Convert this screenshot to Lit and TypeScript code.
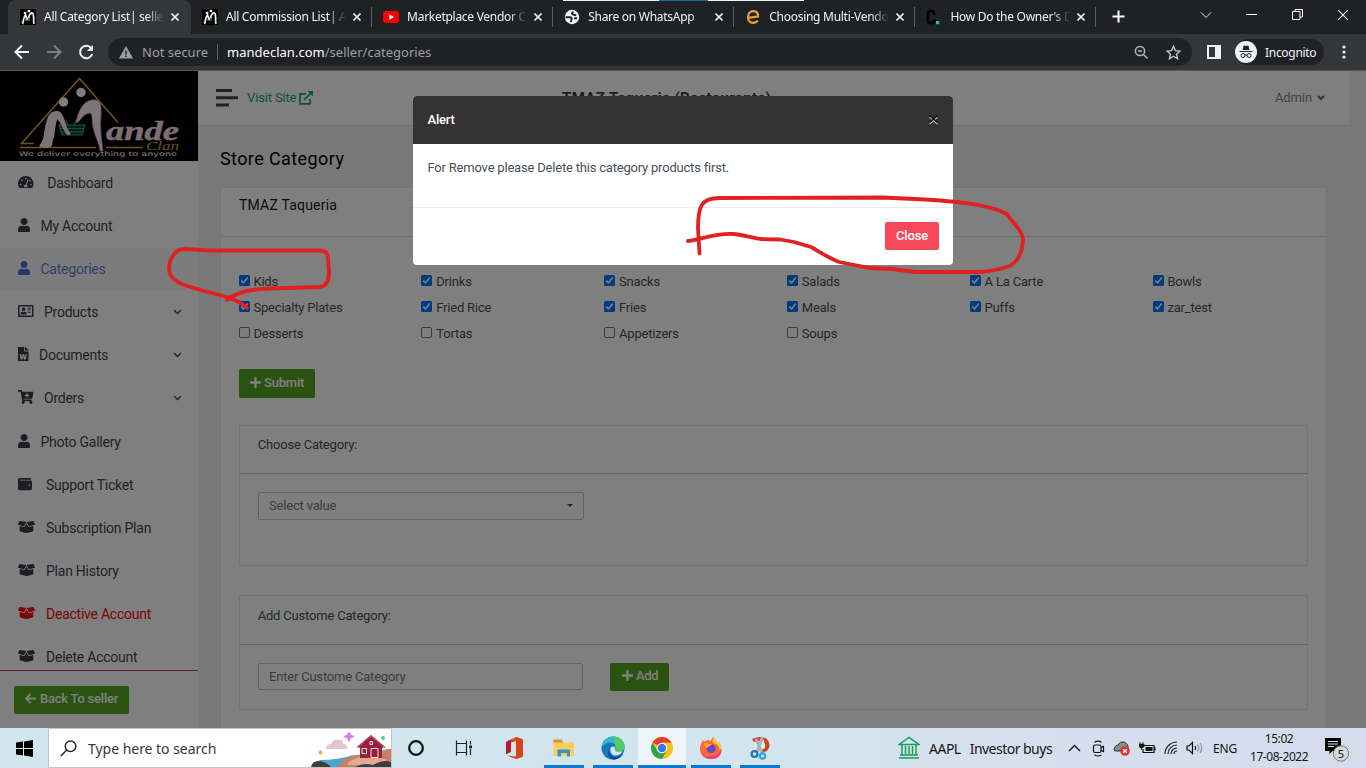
import { LitElement, html, svg, css, nothing } from "lit";
import { customElement } from "lit/decorators.js";
import { classMap } from "lit/directives/class-map.js";
import { styleMap } from "lit/directives/style-map.js";

const USER =
  "M224 256c70.7 0 128-57.3 128-128S294.7 0 224 0 96 57.3 96 128s57.3 128 128 128zm89.6 32h-16.7c-22.2 10.2-46.9 16-72.9 16s-50.6-5.8-72.9-16h-16.7C60.2 288 0 348.2 0 422.4V464c0 26.5 21.5 48 48 48h352c26.5 0 48-21.5 48-48v-41.6c0-74.2-60.2-134.4-134.4-134.4z";
const WALLET =
  "M461.2 128H80c-8.84 0-16-7.16-16-16s7.16-16 16-16h384c8.84 0 16-7.16 16-16 0-26.51-21.49-48-48-48H64C28.65 32 0 60.65 0 96v320c0 35.35 28.65 64 64 64h397.2c28.02 0 50.8-21.53 50.8-48V176c0-26.47-22.78-48-50.8-48zM416 336c-17.67 0-32-14.33-32-32s14.33-32 32-32 32 14.33 32 32-14.33 32-32 32z";
const BOX =
  "M425.7 256c-16.9 0-32.8-9-41.4-23.4L320 126l-64.2 106.6c-8.7 14.5-24.6 23.5-41.5 23.5-4.5 0-9-.6-13.3-1.9L64 215v178c0 14.7 10 27.5 24.2 31l216.2 54.1c10.2 2.5 20.9 2.5 31 0L551.8 424c14.2-3.6 24.2-16.4 24.2-31V215l-137 39.1c-4.3 1.3-8.8 1.9-13.3 1.9zm212.6-112.2L586.8 41c-3.1-6.2-9.8-9.8-16.7-8.9L320 64l91.7 152.1c3.8 6.3 11.4 9.3 18.5 7.3l197.9-56.5c9.9-2.9 14.7-13.9 10.2-23.1zM53.2 41L1.7 143.8c-4.6 9.2.3 20.2 10.1 23l197.9 56.5c7.1 2 14.7-1 18.5-7.3L320 64 69.8 32.1c-6.9-.8-13.5 2.7-16.6 8.9z";
const PLUS =
  "M416 208H272V64c0-17.67-14.33-32-32-32h-32c-17.67 0-32 14.33-32 32v144H32c-17.67 0-32 14.33-32 32v32c0 17.67 14.33 32 32 32h144v144c0 17.67 14.33 32 32 32h32c17.67 0 32-14.33 32-32V304h144c17.67 0 32-14.33 32-32v-32c0-17.67-14.33-32-32-32z";
const CART =
  "M504.717 320H211.572l6.545 32h268.418c15.401 0 26.816 14.301 23.403 29.319l-5.517 24.276C523.112 414.668 536 433.828 536 456c0 31.202-25.519 56.444-56.824 55.994-29.823-.429-54.35-24.631-55.155-54.447-.44-16.287 6.085-31.049 16.803-41.548H231.176C241.553 426.165 248 440.326 248 456c0 31.813-26.528 57.431-58.67 55.938-28.54-1.325-51.751-24.385-53.251-52.917-1.158-22.034 10.436-41.455 28.051-51.586L93.883 64H24C10.745 64 0 53.255 0 40V24C0 10.745 10.745 0 24 0h102.529c11.401 0 21.228 8.021 23.513 19.19L159.208 64H551.99c15.401 0 26.816 14.301 23.403 29.319l-47.273 208C525.637 312.246 515.923 320 504.717 320zM408 168h-48v-40c0-8.837-7.163-16-16-16h-16c-8.837 0-16 7.163-16 16v40h-48c-8.837 0-16 7.163-16 16v16c0 8.837 7.163 16 16 16h48v40c0 8.837 7.163 16 16 16h16c8.837 0 16-7.163 16-16v-40h48c8.837 0 16-7.163 16-16v-16c0-8.837-7.163-16-16-16z";
const GAUGE =
  "M288 32C129 32 0 161 0 320c0 53 14 102 39 145 6 9 16 15 28 15h442c12 0 22-6 28-15 25-43 39-92 39-145C576 161 447 32 288 32zm0 64c18 0 32 14 32 32s-14 32-32 32-32-14-32-32 14-32 32-32zM96 384c-18 0-32-14-32-32s14-32 32-32 32 14 32 32-14 32-32 32zm48-160c-18 0-32-14-32-32s14-32 32-32 32 14 32 32-14 32-32 32zm247-40l-61 184c13 12 22 29 22 48 0 12-3 22-9 32H233c-5-10-9-20-9-32 0-35 29-64 64-64h4l61-183c10-30 48-12 38 15zm24 57l20-60c4-3 9-5 13-5 18 0 32 14 32 32s-14 32-32 32c-16 0-30-11-33 1zm65 143c-18 0-32-14-32-32s14-32 32-32 32 14 32 32-14 32-32 32z";
const CARD =
  "M528 32H48C21.500 32 0 53.500 0 80v352c0 26.500 21.500 48 48 48h480c26.500 0 48-21.500 48-48V80c0-26.500-21.500-48-48-48zm-8 392H56V88h464v336zM208 256c35 0 64-29 64-64s-29-64-64-64-64 29-64 64 29 64 64 64zm-90 128h180c12 0 22-9 22-19v-19c0-32-30-58-67-58-11 0-19 8-45 8s-35-8-45-8c-37 0-67 26-67 58v19c0 10 10 19 22 19zm242-64h112v-40H360zm0-80h112v-40H360zm0-72h112v-36H360z";
const WORD =
  "M224 136V0H24C11 0 0 11 0 24v464c0 13 11 24 24 24h336c13 0 24-11 24-24V160H248c-13 0-24-11-24-24zm57 120h28c11 0 18 10 16 20l-38 168c-2 8-8 12-15 12h-38c-8 0-14-5-16-12-26-103-21-77-26-108-1 14-2 17-26 108-2 7-8 12-16 12h-37c-7 0-14-5-16-12L60 276c-3-10 5-20 15-20h29c8 0 14 5 16 13 16 79 20 110 21 123 2-10 5-32 32-124 2-7 8-12 15-12h22c8 0 14 5 16 12 28 94 30 112 31 124 2-11 4-36 19-123 2-8 8-13 15-13zm103-134v6H256V0h6c6 0 12 2 17 7l98 98c5 4 7 10 7 17z";

interface NavItem {
  label: string;
  d: string;
  vb: string;
  w: number;
  h: number;
  x: number;
  more?: boolean;
  kind?: string;
}
const NAV: NavItem[] = [
  { label: "Dashboard", d: GAUGE, vb: "0 0 576 512", w: 15.5, h: 14, x: 29.3 },
  { label: "My Account", d: USER, vb: "0 0 448 512", w: 12.2, h: 14, x: 22.5 },
  { label: "Categories", d: USER, vb: "0 0 448 512", w: 12.2, h: 14, x: 22.5, kind: "active" },
  { label: "Products", d: CARD, vb: "0 0 576 512", w: 15.5, h: 14, x: 26, more: true },
  { label: "Documents", d: WORD, vb: "0 0 384 512", w: 10.5, h: 14, x: 21, more: true },
  { label: "Orders", d: CART, vb: "0 0 576 512", w: 15.5, h: 14, x: 26, more: true },
  { label: "Photo Gallery", d: USER, vb: "0 0 448 512", w: 12.2, h: 14, x: 22.5 },
  { label: "Support Ticket", d: WALLET, vb: "0 0 512 512", w: 14, h: 14, x: 28 },
  { label: "Subscription Plan", d: BOX, vb: "0 0 640 512", w: 17, h: 14, x: 28 },
  { label: "Plan History", d: BOX, vb: "0 0 640 512", w: 17, h: 14, x: 28 },
  { label: "Deactive Account", d: BOX, vb: "0 0 640 512", w: 17, h: 14, x: 28, kind: "danger" },
  { label: "Delete Account", d: BOX, vb: "0 0 640 512", w: 17, h: 14, x: 28 },
];

const CATEGORIES: [string, boolean][] = [
  ["Kids", true], ["Drinks", true], ["Snacks", true], ["Salads", true], ["A La Carte", true], ["Bowls", true],
  ["Specialty Plates", true], ["Fried Rice", true], ["Fries", true], ["Meals", true], ["Puffs", true], ["zar_test", true],
  ["Desserts", false], ["Tortas", false], ["Appetizers", false], ["Soups", false],
];

const fa = (d: string, vb: string, w: number, h: number) =>
  html`<svg width=${w} height=${h} viewBox=${vb} fill="currentColor"><path fill-rule="evenodd" d=${d} /></svg>`;

const cross = (size: number, stroke: number) =>
  html`<svg width=${size} height=${size} viewBox="0 0 10 10" stroke="currentColor" stroke-width=${stroke} fill="none"><path d="M1 1l8 8M9 1l-8 8" /></svg>`;

const mandeIcon = svg`<rect width="16" height="16" fill="#000"/><path d="M1 14L8 1l7 9" stroke="#6b5325" stroke-width=".8" fill="none"/><rect x="5" y="8" width="5" height="4" fill="#1f5a40"/><circle cx="5" cy="4" r="1.300" fill="#fff"/><circle cx="9" cy="2" r="1.300" fill="#fff"/><path d="M2.500 15C4 12 3 8 5.500 6l2 5M8.500 9c1-4 2.500-5.500 4-5 2 1 .5 6 1.500 11" stroke="#f6eeee" stroke-width="1.700" fill="none"/>`;

const FAVICONS: Record<string, unknown> = {
  mande: mandeIcon,
  youtube: svg`<rect y="2" width="16" height="12" rx="3" fill="#f00"/><path d="M6.300 5.300v5.400L11 8z" fill="#fff"/>`,
  globe: svg`<circle cx="8" cy="8" r="7.200" fill="#f1f3f4"/><path d="M1.500 8.200l4.500.1q2 .2 1.600 2L6.800 13M9.500 3q-2.500 1-.8 2.500l3.500.8M10 9.500l3-.5" stroke="#202124" stroke-width="1.900" fill="none"/>`,
  ecom: svg`<path d="M2.800 8.800L13 7.500C13 4 11 2.200 8.400 2.200 5 2.200 3 4.800 3 8.200c0 3.200 2 5.600 5.300 5.600 2 0 3.400-.7 4.600-2" stroke="#f0a52e" stroke-width="2.200" fill="none"/>`,
  cdot: svg`<path d="M8 6V4.500C8 1 2 1 2 4.500v7C2 15 8 15 8 11.500V10" stroke="#000" stroke-width="2.800" fill="none"/><rect x="10" y="12" width="3.200" height="3.200" fill="#1cb5d8"/>`,
};

const TABS = [
  { icon: "mande", text: "All Category List| seller", active: true },
  { icon: "mande", text: "All Commission List| Admin" },
  { icon: "youtube", text: "Marketplace Vendor Commission" },
  { icon: "globe", text: "Share on WhatsApp" },
  { icon: "ecom", text: "Choosing Multi-Vendor" },
  { icon: "cdot", text: "How Do the Owner's Do" },
];

@customElement("browser-chrome")
class BrowserChrome extends LitElement {
  static styles = css`
    :host { display: block; height: 71px; background: #202124; color: #f1f3f4; font: 12px "Noto Sans", "Open Sans", sans-serif; box-sizing: border-box; position: relative; }
    svg { display: block; flex: none; }
    .peek { position: absolute; top: 0; left: 563px; width: 241px; height: 1px; background: linear-gradient(90deg, #f1f3f4 40%, #176ba8 40% 60%, #f1f3f4 60%); }
    .strip { display: flex; height: 34px; padding-left: 8px; align-items: stretch; }
    .tab { width: 181.100px; box-sizing: border-box; display: flex; align-items: center; padding: 0 10.500px 0 12px; position: relative; }
    .tab.active { background: #35363a; border-radius: 8px 8px 0 0; width: 183px; padding-right: 12px; margin-right: -1px; }
    .tab .name { flex: 1; min-width: 0; margin: 0 7px 0 8px; overflow: hidden; white-space: nowrap; letter-spacing: -.28px; line-height: 20px; -webkit-mask-image: linear-gradient(90deg, #000 85%, transparent 100%); }
    .sep { border-left: 1px solid #5b5c5f; height: 20px; align-self: center; margin-right: -1px; }
    .plus { margin: 10px 0 0 17px; }
    .win { margin-left: auto; display: flex; align-items: center; padding: 0 17px 5px 0; gap: 34.500px; }
    .bar { height: 36px; background: #35363a; border-bottom: 1px solid #55565a; display: flex; align-items: center; }
    .nav { width: 108px; display: flex; gap: 16px; padding-left: 14px; box-sizing: border-box; }
    .omni { width: 1084px; height: 28px; border-radius: 14px; background: #202124; display: flex; align-items: center; box-sizing: border-box; padding: 0 11px; font-size: 13px; color: #9aa0a6; }
    .warn { margin-right: 9px; }
    .div { width: 1px; height: 16px; background: #5f6368; margin: 0 9px 0 9px; }
    .url { letter-spacing: .01px; }
    .url b { font-weight: 400; color: #fff; }
    .tools { margin-left: auto; display: flex; gap: 17px; }
    .side { margin-left: 15px; }
    .incog { margin-left: 14px; width: 89px; height: 26px; border-radius: 13px; background: #202124; display: flex; align-items: center; gap: 8px; font-size: 12px; letter-spacing: -.3px; }
    .dots { margin-left: 18px; }
  `;
  render() {
    return html`
      <div class="peek"></div>
      <div class="strip">
        ${TABS.map(
          (t, i) => html`<div class=${classMap({ tab: true, active: !!t.active })}>
              <svg width="16" height="16" viewBox="0 0 16 16">${FAVICONS[t.icon]}</svg>
              <span class="name">${t.text}</span>
              <svg width="8" height="8" viewBox="0 0 8 8" stroke="#e8eaed" stroke-width="1.600"><path d="M.5 .5l7 7M7.500 .5l-7 7" /></svg>
            </div>
            ${i > 0 ? html`<span class="sep"></span>` : nothing}`
        )}
        <svg class="plus" width="13" height="13" stroke="#fff" stroke-width="2"><path d="M6.500 .5v12M.5 6.500h12" /></svg>
        <div class="win">
          <svg width="12" height="8" fill="none" stroke="#e8eaed"><path d="M1 1.500l5 5 5-5" /></svg>
          <svg width="11" height="2"><path d="M0 .5h11" stroke="#fff" /></svg>
          <svg width="11" height="11" fill="none" stroke="#fff"><path d="M.5 2.500h7.500v8H.5zM3 2.500v-2h7.500V8H8" /></svg>
          ${cross(12, 0.9)}
        </div>
      </div>
      <div class="bar">
        <div class="nav">
          <svg width="16" height="16" fill="none" stroke="#f1f3f4" stroke-width="2"><path d="M15 8H2M8 1.500L1.500 8 8 14.500" /></svg>
          <svg width="16" height="16" fill="none" stroke="#7d7f82" stroke-width="2"><path d="M1 8h13M8 1.500L14.500 8 8 14.500" /></svg>
          <svg width="16" height="16" fill="none" stroke="#f1f3f4" stroke-width="2"><path d="M13.200 4.200A6.200 6.200 0 1 0 14.200 10" /><path d="M15 1v6H9z" fill="#f1f3f4" stroke="none" /></svg>
        </div>
        <div class="omni">
          <svg class="warn" width="14" height="13" viewBox="0 0 14 13"><path d="M7 0l7 12.500H0z" fill="#9aa0a6" /><path d="M7 4.500v4M7 9.500v1.500" stroke="#202124" stroke-width="1.500" /></svg>
          <span>Not secure</span><span class="div"></span>
          <span class="url"><b>mandeclan.com</b>/seller/categories</span>
          <div class="tools">
            <svg width="15" height="15" fill="none" stroke="#b4b7ba" stroke-width="1.500"><circle cx="6" cy="6" r="4.600" /><path d="M9.500 9.500l4 4M4 6h4" /></svg>
            <svg width="15" height="15" viewBox="0 0 24 24" fill="none" stroke="#c4c7ca" stroke-width="2.200"><path d="M12 2l3 7 7.500.6-5.700 5 1.700 7.400L12 18l-6.500 4 1.700-7.400-5.700-5L9 9z" /></svg>
          </div>
        </div>
        <svg class="side" width="14" height="14"><path fill="#f1f3f4" fill-rule="evenodd" d="M0 0h14v14H0zM2 2v10h6V2z" /></svg>
        <div class="incog">
          <svg width="22" height="22" viewBox="0 0 22 22"><circle cx="11" cy="11" r="11" fill="#f1f3f4" /><path d="M7.500 9l1-4c1-1 1.500 0 2.500 0s1.500-1 2.500 0l1 4zM4.500 10h13v1h-13z" fill="#202124" /><g fill="none" stroke="#202124"><circle cx="8" cy="14.500" r="2" /><circle cx="14" cy="14.500" r="2" /><path d="M10 14.300q1-.8 2 0" /></g></svg>
          <span>Incognito</span>
        </div>
        <svg class="dots" width="4" height="14" fill="#f1f3f4"><circle cx="2" cy="2" r="1.600" /><circle cx="2" cy="7" r="1.600" /><circle cx="2" cy="12" r="1.600" /></svg>
      </div>
    `;
  }
}

@customElement("side-bar")
class SideBar extends LitElement {
  static styles = css`
    :host { display: flex; flex-direction: column; width: 198px; height: 657px; background: #fff; font: 14px Roboto, sans-serif; color: #3f474f; flex: none; }
    svg { display: block; flex: none; }
    .list { height: 510px; overflow: hidden; border-bottom: 1px solid #e02f7c; box-sizing: border-box; flex: none; }
    .item { height: 43.170px; display: flex; align-items: center; padding: 0 16px 0 18px; box-sizing: border-box; }
    .item .ico { color: #343a46; display: flex; margin-top: -2px; }
    .item.active { background: #f8f8f8; color: #5f7ed0; }
    .item.active .ico { color: #4a70d0; }
    .item.danger, .item.danger .ico { color: #fa0a10; }
    .label { flex: 1; line-height: 20px; white-space: nowrap; letter-spacing: -.24px; }
    .foot { padding: 15px 14px; }
    .btn { display: flex; align-items: center; gap: 4px; width: 115px; height: 28px; box-sizing: border-box; padding: 0 10px 4px 11px; border-radius: 2px; background: #55a522; color: #fff; font-size: 13px; font-weight: 500; white-space: nowrap; letter-spacing: -.22px; }
  `;
  render() {
    return html`
      <svg width="198" height="90" viewBox="0 0 198 90">
        <rect width="198" height="90" fill="#000" />
        <path d="M118 51.500L79.500 7.500 21.500 72.500H34M20 76.500h76M106 76.500h37" fill="none" stroke="#d8ac3c" stroke-width="1.500" />
        <path d="M59 54h26l-3 10H62zM60 57.500h24M61 61h22M66 50l2 4M76 49l-2 5" fill="#0c3c2a" stroke="#30a878" stroke-width="1.200" />
        <circle cx="81" cy="21.500" r="4.700" fill="#fff" /><circle cx="63.500" cy="31" r="4.700" fill="#fff" />
        <path d="M39.500 76c0-4 3-4 4-10 2-12 3-26 13-26 6 0 8 8 10 15 1 4 3 5 4 7 0 3-3 3-5 0-3-5-5-10-8-14-3 6-2 17-5 22 0 3 0 4-2 6-2 1-8 1-11 0z" fill="#f8e8ee" />
        <path d="M76 51c2-10 6-20 15-22 7-1 10 1 10 7 1 8-1 14 0 23 0 9 2 16 2 21h-3c-1-9-8-19-8-32 0-5-1-7-5-5-4 1-6 6-10 9z" fill="#f8e8ee" stroke="#b76384" stroke-width=".6" />
        <text x="106" y="68.500" font-family="Liberation Serif, serif" font-style="italic" font-weight="700" font-size="28" textLength="73" lengthAdjust="spacingAndGlyphs" fill="#f8dce6" stroke="#f8dce6" stroke-width=".5">ande</text>
        <text x="146" y="79" font-family="Liberation Serif, serif" font-style="italic" font-size="12" textLength="33" lengthAdjust="spacingAndGlyphs" fill="#d2aa40">Clan</text>
        <text x="19" y="85" font-family="DejaVu Sans, sans-serif" font-size="6.500" textLength="158" lengthAdjust="spacingAndGlyphs" fill="#fff">We deliver everything to anyone</text>
      </svg>
      <div class="list">
        ${NAV.map(
          (n) => html`<div class=${classMap({ item: true, [n.kind ?? "plain"]: true })}>
            <span class="ico" style=${styleMap({ width: n.x + "px" })}>${fa(n.d, n.vb, n.w, n.h)}</span>
            <span class="label">${n.label}</span>
            ${n.more ? html`<svg width="9" height="6" fill="none" stroke="#3f474f" stroke-width="1.300"><path d="M1 1l3.500 3.500L8 1" /></svg>` : nothing}
          </div>`
        )}
      </div>
      <div class="foot">
        <div class="btn"><svg width="11" height="11" fill="none" stroke="#fff" stroke-width="1.800"><path d="M11 5.500H1.500M5.500 1L1 5.500 5.500 10" /></svg>Back To seller</div>
      </div>
    `;
  }
}

@customElement("store-page")
class StorePage extends LitElement {
  static styles = css`
    :host { display: flex; flex-direction: column; flex: 1; height: 657px; overflow: hidden; background: #f0f0f0; font: 13px Roboto, sans-serif; color: #495057; letter-spacing: -.19px; }
    svg { display: block; flex: none; }
    .head { width: 1151px; height: 55px; box-sizing: border-box; background: #fff; border-bottom: 1px solid #e2e2e2; display: flex; align-items: center; padding: 0 24px 0 18px; flex: none; }
    .visit { margin: -1px 0 0 9px; color: #1d9f7e; display: flex; align-items: center; gap: 3px; width: 315px; letter-spacing: -.15px; }
    .shop { font-size: 15px; font-weight: 700; color: #343a46; letter-spacing: .36px; margin-top: -1px; }
    .admin { margin: -1px 0 0 auto; color: #82878c; display: flex; align-items: center; gap: 5px; letter-spacing: -.1px; }
    h1 { margin: 0; padding: 20px 0 0 22px; font-size: 18px; font-weight: 400; line-height: 25px; color: #000; letter-spacing: .4px; height: 61px; box-sizing: border-box; flex: none; }
    .card { margin-left: 22px; width: 1107px; background: #fff; flex: 1; box-sizing: border-box; border: 1px solid #e8e8e8; border-bottom: 0; }
    .card-head { height: 49px; border-bottom: 1px solid #dcdcdc; box-sizing: border-box; padding: 8px 18px; font-size: 14px; line-height: 19px; color: #16191c; letter-spacing: .2px; }
    .card-body { padding: 31px 18px 0 18px; }
    .grid { display: grid; grid-template-columns: repeat(6, 182.800px); grid-auto-rows: 26px; }
    .opt { display: flex; align-items: center; gap: 4px; }
    .opt svg { margin: -2px 0 0 -.4px; }
    .label { line-height: 18px; white-space: nowrap; margin-top: 1px; margin-left: -.2px; }
    .btn { display: flex; align-items: center; gap: 3px; box-sizing: border-box; border-radius: 2px; background: #55a522; color: #fff; font-size: 13px; font-weight: 500; letter-spacing: -.2px; }
    .submit { width: 76px; height: 29px; padding: 0 0 2px 11px; margin-top: 23px; }
    .add { width: 59px; height: 28px; padding: 0 0 3px 12px; letter-spacing: -.35px; }
    .panel { border: 1px solid #e8e8e8; width: 1069px; box-sizing: border-box; }
    .p1 { height: 141px; margin-top: 27px; }
    .p2 { height: 115px; margin-top: 29px; }
    .p-head { height: 48px; box-sizing: border-box; border-bottom: 1px solid #c8c8c8; padding: 9px 17.700px; line-height: 20px; }
    .p2 .p-head { height: 49px; padding-top: 10px; }
    .p-body { padding: 18px; display: flex; gap: 27px; }
    .field { width: 326px; height: 28px; box-sizing: border-box; border: 1px solid #c3c6c9; border-radius: 2px; padding: 0 10px 1px; display: flex; align-items: center; justify-content: space-between; color: #747a80; letter-spacing: -.18px; }
    .p2 .field { width: 325px; height: 27px; padding-bottom: 0; letter-spacing: -.2px; }
    .caret { border: 3.500px solid transparent; border-top-color: #495057; border-bottom: 0; }
  `;
  render() {
    return html`
      <div class="head">
        <svg width="22" height="18" fill="#3f4549"><path d="M0 0h16v3H0zM0 7.200h22v3H0zM0 14.400h13v3H0z" /></svg>
        <div class="visit">Visit Site
          <svg width="14" height="14" fill="none" stroke="#1d9f7e" stroke-width="1.700"><path d="M7 2.800H1v10h10V8M5 9l7.500-7.500" /><path d="M8.500 0H14v5.500z" fill="#1d9f7e" stroke="none" /></svg>
        </div>
        <span class="shop">TMAZ Taqueria (Restaurants)</span>
        <span class="admin">Admin <svg width="8" height="6" fill="none" stroke="#5a6066" stroke-width="2"><path d="M1 1l3 3 3-3" /></svg></span>
      </div>
      <h1>Store Category</h1>
      <div class="card">
        <div class="card-head">TMAZ Taqueria</div>
        <div class="card-body">
          <div class="grid">
            ${CATEGORIES.map(
              ([name, on]) => html`<div class="opt">
                <svg width="11" height="11" viewBox="0 0 11 11">
                  ${on
                    ? svg`<rect width="11" height="11" rx="1.500" fill="#0075ff"/><path d="M2.200 5.600l2.300 2.300 4.300-5.500" fill="none" stroke="#fff" stroke-width="1.600"/>`
                    : svg`<rect x=".5" y=".5" width="10" height="10" rx="1.500" fill="none" stroke="#767676"/>`}
                </svg>
                <span class="label">${name}</span>
              </div>`
            )}
          </div>
          <div class="btn submit">${fa(PLUS, "0 0 448 512", 11, 13)} Submit</div>
          <div class="panel p1">
            <div class="p-head">Choose Category:</div>
            <div class="p-body"><div class="field"><span>Select value</span><span class="caret"></span></div></div>
          </div>
          <div class="panel p2">
            <div class="p-head">Add Custome Category:</div>
            <div class="p-body">
              <div class="field">Enter Custome Category</div>
              <div class="btn add">${fa(PLUS, "0 0 448 512", 11, 13)} Add</div>
            </div>
          </div>
        </div>
      </div>
    `;
  }
}

@customElement("alert-dialog")
class AlertDialog extends LitElement {
  static styles = css`
    :host { display: block; width: 540px; height: 169px; border-radius: 4px; overflow: hidden; background: #fff; font: 13px Roboto, sans-serif; color: #495057; letter-spacing: -.2px; }
    .head { height: 48px; background: #333; color: #fff; font-weight: 500; display: flex; align-items: center; justify-content: space-between; padding: 0 14px 1px 14.500px; box-sizing: border-box; }
    .body { height: 64px; box-sizing: border-box; border-bottom: 1px solid #e9ecef; padding: 14px 14.500px; line-height: 20px; }
    .foot { display: flex; justify-content: flex-end; padding: 14px; }
    .close { width: 54px; height: 28px; border-radius: 2px; background: #f64859; color: #fff; font-weight: 500; line-height: 27px; text-align: center; }
    svg { display: block; }
  `;
  render() {
    return html`
      <div class="head"><span>Alert</span>
        <svg width="11" height="13" fill="none" stroke-width="1.400"><path d="M1.500 4l8 7M9.500 4l-8 7" stroke="#c0c0c0" /><path d="M1.500 2.500l8 7M9.500 2.500l-8 7" stroke="#0c0c0c" /></svg>
      </div>
      <div class="body">For Remove please Delete this category products first.</div>
      <div class="foot"><div class="close">Close</div></div>
    `;
  }
}

const APPS = [
  { w: 48, line: 0, art: svg`<circle cx="12" cy="12" r="6.800" fill="none" stroke="#111" stroke-width="2.200"/>` },
  { w: 48, line: 0, art: svg`<path d="M4.500 4.500V7.500h10V4.500M4.500 19.500v-3h10v3M4.500 7.500v9M14.500 7.500v9M18.500 5v3.500M18.500 13v6" fill="none" stroke="#222" stroke-width="1.200"/><rect x="17.200" y="9.500" width="2.800" height="2.800" fill="#111"/>` },
  { w: 51, line: 0, art: svg`<path d="M4 6l10-5 7 2.500v17L14 23 5 19.500l9 1V5L8 7v9l-4 2z" fill="#e2471a"/><path d="M14 1l7 2.500v17L14 23z" fill="#d4451a"/><path d="M4 6l5-2.500V16l-5 2z" fill="#b01f2b"/>` },
  { w: 49, line: 40, art: svg`<path d="M1.500 4h8l2 2.500h10.500V20H1.500z" fill="#f8cf5a"/><path d="M1.500 3.500h8l2 3h-10z" fill="#d8962a"/><path d="M5.500 20.500v-6q0-1 1-1h10.500q1 0 1 1v6h-3V17H9v3.500z" fill="#3f8fc8"/>` },
  { w: 50, line: 40, art: svg`<circle cx="12" cy="12" r="11.500" fill="#1677c9"/><path d="M.7 12C1 4 7 .5 12 .5c7 0 11.500 5 11.500 9.500 0 4-3 6-6.500 6-3 0-3.500-1.500-3-2.500 2-4-1-7-5-7C5 6.500 2 9 .7 12z" fill="#35b9c4"/><path d="M12 .5c7 0 11.500 5 11.500 9.500 0 4-3 6-6.500 6-3 0-3.500-1.500-3-2.500 1.500-3 .5-5-1-6.500C12 5 17 4 12 .5z" fill="#55cc62"/><path d="M9 11c-3 4 0 10 5 10 3 0 6-1 8-3-2 4-6 5.500-10 5.500C6 22 6 14 9 11z" fill="#0c4c9a"/><path d="M14 13c-1 3 4 4 7.500 2-2 4-5 5-8 4.500S9 15.500 9.500 12c1-2 5-2.500 4.500 1z" fill="#d4e6ef"/>` },
  { w: 48, line: 48, hot: true, art: svg`<circle cx="12" cy="12" r="11" fill="#fbc116"/><path d="M2.500 6.500A11 11 0 0 1 21.500 6.500H12v5z" fill="#e33b2e"/><path d="M2.500 6.500A11 11 0 0 0 12 23l4.800-8.500L12 12l-4.500 3z" fill="#2da44e"/><circle cx="12" cy="12" r="5.200" fill="#fff"/><circle cx="12" cy="12" r="4.200" fill="#3b78e7"/>` },
  { w: 50, line: 40, art: svg`<path d="M1 13c0-5 2-6 3-9l1 2c2-2 5-2 7-1 0-2 1-3 3-4 0 3 3 4 5 6 5 6 3 16-8 16C5 23 1 18 1 13z" fill="#fb6a31"/><path d="M15 1c0 3 3 4 5 6 3 4 3 9 0 12 2-5 0-9-3-11-3-1-5-2-2-7z" fill="#fcc934"/><path d="M1.500 15c2 6 8 6 13 5 4-1 7-4 7-8 2 6-2 11-9 11-7 0-10-4-11-8z" fill="#f2388a"/><circle cx="12" cy="12.500" r="4.600" fill="#6a45cc"/><path d="M5 7c3-1 5 1 8 1-1 2-4 2-4 4-2 0-4-2-4-5z" fill="#fd9f28"/>` },
  { w: 48, line: 40, art: svg`<path d="M4 3q9-4 15 0 5 6 0 12l-5 2-2-3q6-1 5-6-4-4-11-2z" fill="#c9461f"/><path d="M7 6l9-2 1 8-6 3-4-4z" fill="#e3e7ea"/><path d="M14.500 1L9 16M8 3l6 14" stroke="#aab2b8" stroke-width="3"/><circle cx="6.500" cy="18" r="2.900" fill="none" stroke="#1d75bb" stroke-width="2.200"/><circle cx="14.500" cy="20" r="2.700" fill="none" stroke="#36a0d8" stroke-width="2.200"/>` },
];

@customElement("task-bar")
class TaskBar extends LitElement {
  static styles = css`
    :host { display: flex; height: 40px; background: linear-gradient(90deg, #cfe6ee, #d3e5ee 55%, #d6deed 80%, #d5dbeb); font: 14px "Noto Sans", "Open Sans", sans-serif; color: #161616; white-space: nowrap; }
    svg { display: block; flex: none; }
    .start { width: 48px; display: flex; align-items: center; justify-content: center; }
    .search { width: 344px; box-sizing: border-box; background: #fff; border: 1px solid #bdc8cc; display: flex; align-items: center; padding-left: 11px; gap: 11px; color: #383838; }
    .search span { flex: 1; letter-spacing: -.03px; }
    .app { display: flex; flex-direction: column; align-items: center; justify-content: space-between; padding-top: 8px; box-sizing: border-box; }
    .hot { background: #edf5f9; }
    .line { height: 3px; background: #0a78d4; }
    .tray { margin-left: auto; display: flex; align-items: center; }
    .stock { margin: 0 16px 0 9px; letter-spacing: -.52px; display: flex; gap: 9px; }
    .icons { display: flex; align-items: center; gap: 8px; }
    .up { margin-right: 3px; }
    .lang { margin-left: 10px; font-size: 12px; letter-spacing: -.2px; }
    .clock { margin-left: 13px; width: 58px; font-size: 12px; line-height: 17.500px; text-align: center; letter-spacing: -.45px; display: flex; flex-direction: column; padding-bottom: 1px; }
    .note { margin: 4px 16px 0 17px; }
  `;
  render() {
    return html`
      <div class="start"><svg width="17" height="17" fill="#000"><path d="M0 2.500l7-1V8H0zM8 1.400L17 0v8H8zM0 9h7v6.500l-7-1zM8 9h9v8l-9-1.400z" /></svg></div>
      <div class="search">
        <svg width="17" height="17" fill="none" stroke="#222" stroke-width="1.400"><circle cx="10.500" cy="6.300" r="5.300" /><path d="M6.700 10L.8 16" /></svg>
        <span>Type here to search</span>
        <svg width="80" height="38" viewBox="0 0 80 38">
          <path d="M8 31q20 0 34-5l-7 12H12z" fill="#49a6cf" />
          <path d="M26 38q6-9 18-12l22-1q5-5 14-5v18z" fill="#c78064" />
          <path d="M38 33q12-9 32-4l6 2-8 5H36z" fill="#e3aa91" />
          <path d="M0 38q1-6 8-6 8 1 12 6zM44 38q9-5 18-2 10-6 18-3v5z" fill="#433c3d" />
          <path d="M15 20q0-5 5-5 2-6 8-4 4-1 4 4 5 0 4 5z" fill="#e6c6ce" />
          <path d="M47 18L60 7l13 11-2 1v10H49V19z" fill="#98203c" />
          <path d="M46 18.500L60 6.500l14 12" fill="none" stroke="#b0526a" stroke-width="1.300" />
          <path d="M51 19.500h4.500v5H51zM60 19.500h7v9h-7zM59 12.500h2.500v3H59z" fill="none" stroke="#f7dfe2" />
          <path d="M38 3l1.500 3L43 7.500 39.500 9 38 12.500 36.500 9 33 7.500 36.500 6z" fill="#cf80ee" stroke="#cf80ee" />
          <circle cx="72" cy="9" r="1.900" fill="#55c784" /><circle cx="9.500" cy="23.500" r="1.900" fill="#f4ab23" />
        </svg>
      </div>
      ${APPS.map(
        (a) => html`<div class=${classMap({ app: true, hot: !!a.hot })} style=${styleMap({ width: a.w + "px" })}>
          <svg width="24" height="24" viewBox="0 0 24 24">${a.art}</svg>
          <div class="line" style=${styleMap({ width: a.line + "px" })}></div>
        </div>`
      )}
      <div class="tray">
        <svg width="22" height="24" fill="none" stroke="#16a05a" stroke-width="1.500"><path d="M1 8.500L11 1.500l10 7zM2 19h18M4 9v10M7.500 10v8M11 10v8M14.500 10v8M18 9v10M1 22h20" /></svg>
        <div class="stock"><span>AAPL</span><span>Investor buys</span></div>
        <div class="icons">
          <svg class="up" width="13" height="8" fill="none" stroke="#111" stroke-width="1.400"><path d="M1 7l5.500-5.500L12 7" /></svg>
          <svg width="13" height="17" fill="none" stroke="#111" stroke-width="1.200"><rect x="1.500" y="5" width="7.500" height="7.500" rx="1.500" /><path d="M9 7.500l2.500-1v5L9 10.500M2.500 2.200q3.500-2 7 0M2.500 15q3.500 2 7 0" /></svg>
          <svg width="18" height="16"><path d="M2 11Q0 9 2 7q1-2 3-2 2-4 6-3 3 1 4 4v5z" fill="#8a8a8a" stroke="#333" /><circle cx="12" cy="11" r="4.800" fill="#d93832" /><path d="M10.200 9.200l3.600 3.600M13.800 9.200l-3.600 3.600" stroke="#fff" stroke-width="1.300" /></svg>
          <svg width="17" height="14"><path d="M5 4.500h10v7H4V8M16 6.500v3" fill="none" stroke="#111" stroke-width="1.200" /><path d="M6.500 6h7v4h-7z" fill="#111" /><path d="M1 1v2M4 1v2M0 3h5v2.500L3.500 7h-2L0 5.500zM2.500 7v2" fill="#111" stroke="#111" stroke-width=".7" /></svg>
          <svg width="14" height="14" fill="none" stroke="#222" stroke-width="1.200"><path d="M1 13A12 12 0 0 1 13 1M4 13a9 9 0 0 1 9-9M7 13a6 6 0 0 1 6-6M10 13a3 3 0 0 1 3-3" /></svg>
          <svg width="17" height="14" fill="none" stroke="#111" stroke-width="1.200"><path d="M1 5h2l3.500-3.500v11L3 9H1z" /><path d="M9 5q1.500 2 0 4" /><path d="M11.500 3.500q2.500 3.500 0 7M14 2q3.500 5 0 10" stroke="#8c949c" /></svg>
        </div>
        <span class="lang">ENG</span>
        <div class="clock"><span>15:02</span><span>17-08-2022</span></div>
        <svg class="note" width="25" height="26"><path d="M0 1h16v13H7.500l-3 3v-3H0z" fill="#000" /><path d="M3 4.500h10M3 7h10M3 9.500h6" stroke="#dce2ee" /><circle cx="16" cy="16.500" r="7.700" fill="#d5d7dc" stroke="#777" /><text x="16" y="20.500" text-anchor="middle" font-family="Noto Sans, sans-serif" font-size="11" fill="#111">5</text></svg>
      </div>
    `;
  }
}

@customElement("app-root")
class AppRoot extends LitElement {
  static styles = css`
    :host { display: flex; flex-direction: column; width: 1366px; height: 768px; overflow: hidden; position: relative; }
    .page { display: flex; height: 657px; position: relative; }
    .shade { position: absolute; inset: 0; background: rgba(0, 0, 0, .5); display: flex; justify-content: center; align-items: flex-start; padding-top: 25px; }
    .ink { position: absolute; inset: 0; pointer-events: none; }
  `;
  render() {
    return html`
      <browser-chrome></browser-chrome>
      <div class="page">
        <side-bar></side-bar>
        <store-page></store-page>
        <div class="shade"><alert-dialog></alert-dialog></div>
      </div>
      <task-bar></task-bar>
      <svg class="ink" width="1366" height="768" fill="none" stroke="#df2122" stroke-width="3.800" stroke-linecap="round" stroke-linejoin="round">
        <path d="M247 308C238 299 220 295 204 291C188 286 169 283 169 269C169 258 176 249 184 249L210 250.500L320 250.500Q328 251 328 258L329 272Q329 286 320 287L270 288.500C250 289 236 292 227 300" />
        <path d="M699.500 253.500L698 228C698 207 701 198 719 198L883 197.500L925 199.500C965 202 990 205 1007 214C1013 224 1022 229 1023 240C1022 255 1016 264 1007 267Q990 272 977 272L915 272L893 269L870 268L839 262C827 257 820 252 811 247L794 242L780 239.500L760 239C748 237 742 234.500 733 234C715 233 703 239 688 241" />
      </svg>
    `;
  }
}
